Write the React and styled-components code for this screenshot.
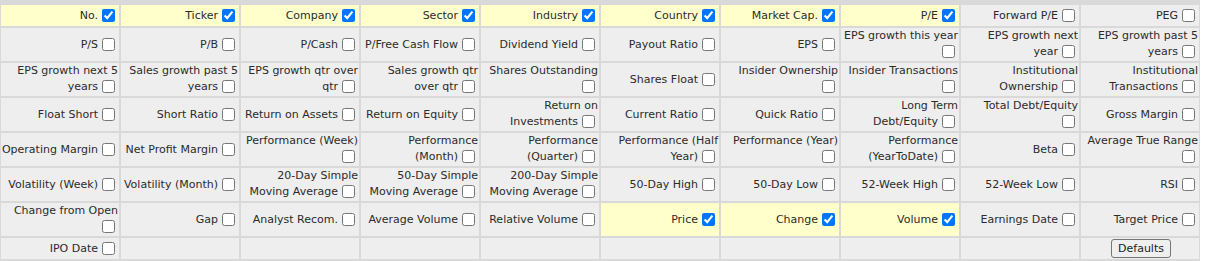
import React from "react";
import styled, { createGlobalStyle } from "styled-components";

const GlobalStyle = createGlobalStyle`
    body {
        margin: 0;
        background: #fff;
        font-family: "DejaVu Sans", Verdana, sans-serif;
    }
`
const Board = styled.div`
    width: 1200px;
    background-color: #d9d9d9;
    padding: 5px 1px 1px 1px;
    box-sizing: border-box;
`
const Grid = styled.div`
    display: grid;
    grid-template-columns: repeat(10, 118px);
    grid-template-rows: 21px repeat(6, 33px) 21px;
    gap: 2px;
`
const Cell = styled.label`
    display: flex;
    align-items: center;
    justify-content: ${props => props.$center ? 'center' : 'flex-end'};
    text-align: right;
    background-color: ${props => props.$checked ? '#ffffcc' : '#eeeeee'};
    color: #2b2b2b;
    font-size: 11px;
    line-height: 14px;
    padding: 0 1px 0 0;
    overflow: hidden;
`
const Box = styled.input`
    width: 13px;
    height: 13px;
    margin: 2px 3px 3px 4px;
    vertical-align: -3px;
`
const Button = styled.button`
    font-family: "DejaVu Sans", Verdana, sans-serif;
    font-size: 11px;
    color: #222;
    background-color: #efefef;
    border: 1px solid #767676;
    border-radius: 3px;
    padding: 1px 6px;
    height: 19px;
    margin-left: 3px;
`
const NextRow = styled.div`
    display: grid;
    grid-template-columns: repeat(14, 83px);
    gap: 2px;
    height: 8px;
    background-color: #d9d9d9;
    padding-top: 2px;
    width: 1200px;
    div {
        background-color: #f4f4f4;
    }
`

// name, checked; a "\n" in a name forces the line break the original table shows
const rows = [
    [['No.', 1], ['Ticker', 1], ['Company', 1], ['Sector', 1], ['Industry', 1], ['Country', 1], ['Market Cap.', 1], ['P/E', 1], ['Forward P/E'], ['PEG']],
    [['P/S'], ['P/B'], ['P/Cash'], ['P/Free Cash Flow'], ['Dividend Yield'], ['Payout Ratio'], ['EPS'], ['EPS growth this year'], ['EPS growth next year'], ['EPS growth past 5 years']],
    [['EPS growth next 5 years'], ['Sales growth past 5 years'], ['EPS growth qtr over qtr'], ['Sales growth qtr over qtr'], ['Shares Outstanding'], ['Shares Float'], ['Insider Ownership'], ['Insider Transactions'], ['Institutional Ownership'], ['Institutional Transactions']],
    [['Float Short'], ['Short Ratio'], ['Return on Assets'], ['Return on Equity'], ['Return on Investments'], ['Current Ratio'], ['Quick Ratio'], ['Long Term Debt/Equity'], ['Total Debt/Equity\n'], ['Gross Margin']],
    [['Operating Margin'], ['Net Profit Margin'], ['Performance (Week)'], ['Performance\n(Month)'], ['Performance (Quarter)'], ['Performance (Half Year)'], ['Performance (Year)'], ['Performance (YearToDate)'], ['Beta'], ['Average True Range']],
    [['Volatility (Week)'], ['Volatility (Month)'], ['20-Day Simple Moving Average'], ['50-Day Simple Moving Average'], ['200-Day Simple Moving Average'], ['50-Day High'], ['50-Day Low'], ['52-Week High'], ['52-Week Low'], ['RSI']],
    [['Change from Open'], ['Gap'], ['Analyst Recom.'], ['Average Volume'], ['Relative Volume'], ['Price', 1], ['Change', 1], ['Volume', 1], ['Earnings Date'], ['Target Price']],
]

function Option({ name, on }) {
    const parts = name.split('\n')
    return (
        <Cell $checked={!!on}>
            <span>
                {parts.map((p, i) => (
                    <React.Fragment key={i}>
                        {i > 0 && <br />}
                        {p}
                    </React.Fragment>
                ))}
                <Box type="checkbox" defaultChecked={!!on} />
            </span>
        </Cell>
    )
}

export default function App() {
    return (
        <>
            <GlobalStyle />
            <Board>
                <Grid>
                    {rows.flat().map(([name, on]) => (
                        <Option key={name} name={name} on={on} />
                    ))}
                    <Option name="IPO Date" />
                    {Array.from({ length: 8 }).map((_, i) => <Cell as="div" key={'e' + i} />)}
                    <Cell as="div" $center>
                        <Button>Defaults</Button>
                    </Cell>
                </Grid>
            </Board>
            <NextRow>
                {Array.from({ length: 14 }).map((_, i) => <div key={i} />)}
            </NextRow>
        </>
    )
}
